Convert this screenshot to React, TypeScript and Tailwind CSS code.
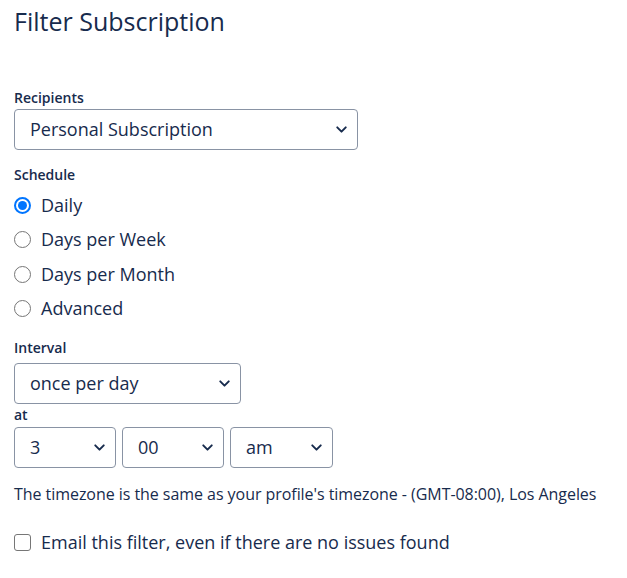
import { ChevronDown } from "lucide-react";

function Select({ value, width }: { value: string; width: string }) {
    return (
        <div className={`relative h-[41px] ${width} rounded-[4px] border border-[#8993a4] bg-white flex items-center`}>
            <span className="pl-[15px] text-[18px] text-[#172b4d]">{value}</span>
            <ChevronDown className="absolute right-[7px] top-[11px] w-[17px] h-[17px] text-[#172b4d]" strokeWidth={2.75} />
        </div>
    );
}

function Radio({ label, checked }: { label: string; checked?: boolean }) {
    return (
        <label className="flex items-center h-[34.5px] gap-[10px]">
            {checked ? (
                <span className="w-[17px] h-[17px] rounded-full border-[2px] border-[#0075ff] flex items-center justify-center">
                    <span className="w-[9px] h-[9px] rounded-full bg-[#0075ff]" />
                </span>
            ) : (
                <span className="w-[17px] h-[17px] rounded-full border border-[#767676] bg-white" />
            )}
            <span className="text-[18px] text-[#172b4d]">{label}</span>
        </label>
    );
}

export default function App() {
    return (
        <div className="px-[14px] pt-[2px] bg-white min-h-[578px] text-[#172b4d]" style={{ fontFamily: '"Open Sans", "Noto Sans", sans-serif' }}>
            <h1 className="text-[25px] leading-[38px] font-normal">Filter Subscription</h1>

            <div className="mt-[48px] text-[14px] font-semibold leading-[20px]">Recipients</div>
            <div className="mt-[1px]">
                <Select value="Personal Subscription" width="w-[344px]" />
            </div>

            <div className="mt-[15px] text-[14px] font-semibold leading-[20px]">Schedule</div>
            <div className="flex flex-col mt-[3px]">
                <Radio label="Daily" checked />
                <Radio label="Days per Week" />
                <Radio label="Days per Month" />
                <Radio label="Advanced" />
            </div>

            <div className="mt-[12px] text-[14px] font-semibold leading-[20px]">Interval</div>
            <div className="mt-[5px]">
                <Select value="once per day" width="w-[227px]" />
            </div>
            <div className="text-[14px] font-semibold leading-[20px] mt-[1px]">at</div>
            <div className="flex gap-[6px] mt-[2px]">
                <Select value="3" width="w-[102px]" />
                <Select value="00" width="w-[102px]" />
                <Select value="am" width="w-[103px]" />
            </div>

            <p className="mt-[16px] text-[16px] leading-[20px] tracking-[-0.05px]">
                The timezone is the same as your profile's timezone - (GMT-08:00), Los Angeles
            </p>

            <label className="mt-[25px] flex items-center gap-[10px]">
                <span className="w-[17px] h-[17px] rounded-[3px] border border-[#767676] bg-white" />
                <span className="text-[18px]">Email this filter, even if there are no issues found</span>
            </label>
        </div>
    );
}
